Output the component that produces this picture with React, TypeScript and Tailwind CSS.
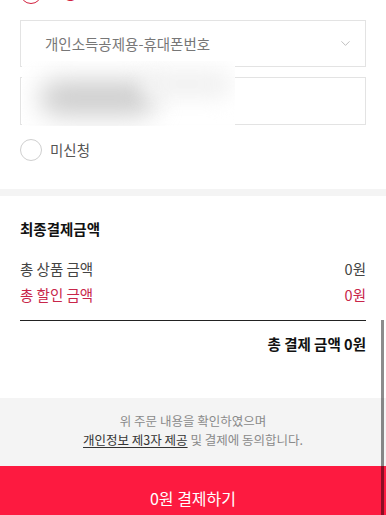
import { ChevronDown } from "lucide-react";

const font = { fontFamily: '"Noto Sans CJK KR", "Noto Sans", sans-serif' };

function Radio({ checked, label }: { checked: boolean; label: string }) {
  return (
    <div className="flex items-center gap-2 h-[22px]">
      {checked ? (
        <span className="w-[22px] h-[22px] rounded-full border-[1.5px] border-[#d3223f] flex items-center justify-center">
          <span className="w-[10px] h-[10px] rounded-full bg-[#d3223f]" />
        </span>
      ) : (
        <span className="w-[22px] h-[22px] rounded-full border border-[#cfcfcf] bg-white" />
      )}
      <span className={`text-[14.5px] ${checked ? "text-[#d3223f]" : "text-[#555]"}`}>{label}</span>
    </div>
  );
}

export default function App() {
  return (
    <div className="relative w-[386px] h-[515px] overflow-hidden bg-white" style={font}>
      <div className="px-5 pb-[28px]">
        <div className="-mt-[18px]">
          <Radio checked label="신청" />
        </div>
        <div className="mt-4 h-[47px] border border-[#e3e3e3] flex items-center justify-between pl-6 pr-3">
          <span className="text-[14.5px] text-[#777]">개인소득공제용-휴대폰번호</span>
          <ChevronDown className="w-[15px] h-[15px] text-[#999]" strokeWidth={1} />
        </div>
        <div className="mt-[10px] h-[48px] border border-[#e3e3e3]" />
        <div className="mt-[14px]">
          <Radio checked={false} label="미신청" />
        </div>
      </div>

      {/* blurred privacy mask over the phone number */}
      <div className="absolute left-[22px] top-[61px] w-[213px] h-[65px] bg-white/95 overflow-hidden">
        <div className="absolute left-[18px] top-[20px] w-[115px] h-[34px] rounded-full bg-[#cccccc] blur-[13px]" />
        <div className="absolute left-[120px] top-[8px] w-[90px] h-[30px] rounded-full bg-[#f2f2f2] blur-[10px]" />
      </div>

      <div className="h-[7px] bg-[#f4f4f4]" />

      <div className="px-5 pt-[22px] pb-[43px]">
        <div className="text-[14.5px] leading-[22px] font-bold text-[#111]">최종결제금액</div>
        <div className="mt-[18px] flex justify-between text-[14.5px] leading-[22px] text-[#444]">
          <span>총 상품 금액</span>
          <span>0원</span>
        </div>
        <div className="mt-[4px] flex justify-between text-[14.5px] leading-[22px] text-[#c8264a]">
          <span>총 할인 금액</span>
          <span>0원</span>
        </div>
        <div className="mt-[14px] h-px bg-[#222]" />
        <div className="mt-[12px] text-right text-[14.5px] leading-[22px] font-bold text-[#111]">총 결제 금액 0원</div>
      </div>

      <div className="h-[68px] bg-[#f4f4f4] pt-[13px] text-center text-[12.5px] leading-[19px] text-[#8a8a8a]">
        <div>위 주문 내용을 확인하였으며</div>
        <div>
          <span className="text-[#333] underline underline-offset-2">개인정보 제3자 제공</span> 및 결제에 동의합니다.
        </div>
      </div>

      <div className="h-[64px] bg-[#fd1a40] flex items-center justify-center text-white text-[16px]">
        0원 결제하기
      </div>

      {/* scroll indicator */}
      <div className="absolute right-[2px] top-[320px] bottom-0 w-[3px] bg-black/45" />
    </div>
  );
}
